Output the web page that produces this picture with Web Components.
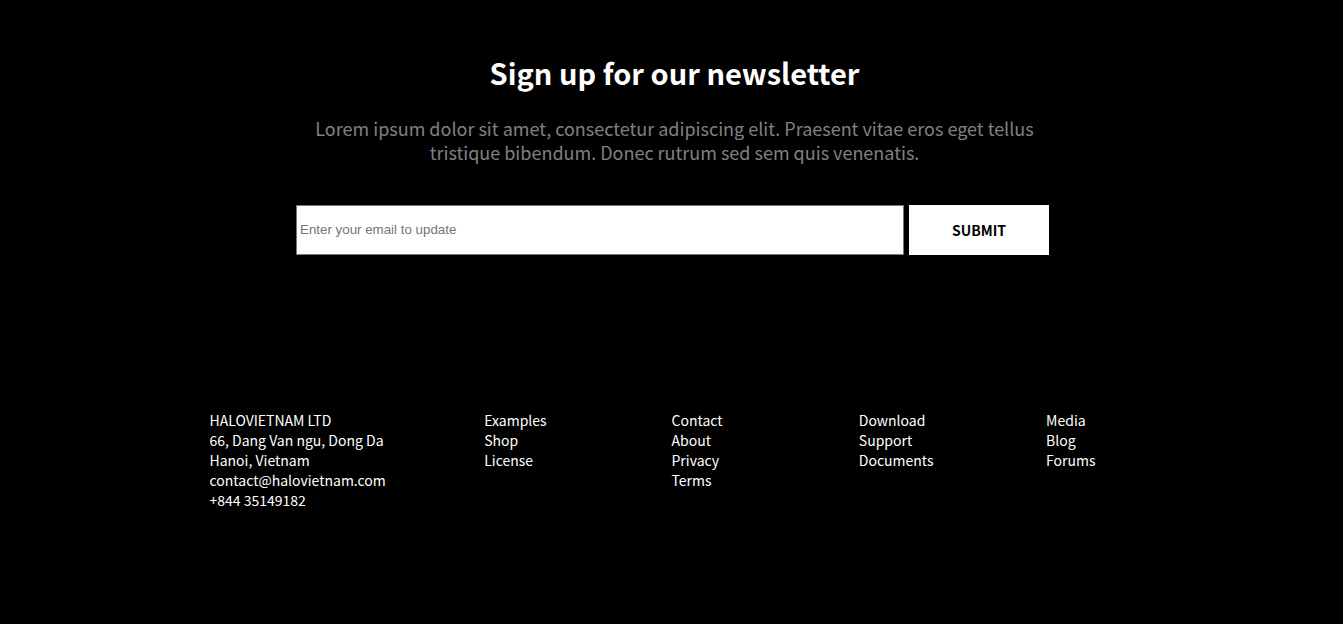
<!DOCTYPE html>
<html lang="en">
<head>
<meta charset="utf-8">
<meta name="viewport" content="width=device-width, initial-scale=1">
<title>Halovietnam newsletter</title>
<style>
  body {
    margin: 0;
    background: #000;
    color: #fff;
    font-family: "Source Sans Pro", "Noto Sans CJK SC", "Noto Sans", sans-serif;
    font-size: 14px;
    line-height: 20px;
  }
</style>
</head>
<body>
<newsletter-signup></newsletter-signup>
<site-footer>
  <footer-column size="wide">
    <span>HALOVIETNAM LTD</span>
    <span>66, Dang Van ngu, Dong Da</span>
    <span>Hanoi, Vietnam</span>
    <a href="mailto:contact@halovietnam.com">contact@halovietnam.com</a>
    <a href="tel:+84435149182">+844 35149182</a>
  </footer-column>
  <footer-column><a href="#examples">Examples</a><a href="#shop">Shop</a><a href="#license">License</a></footer-column>
  <footer-column><a href="#contact">Contact</a><a href="#about">About</a><a href="#privacy">Privacy</a><a href="#terms">Terms</a></footer-column>
  <footer-column><a href="#download">Download</a><a href="#support">Support</a><a href="#documents">Documents</a></footer-column>
  <footer-column size="narrow"><a href="#media">Media</a><a href="#blog">Blog</a><a href="#forums">Forums</a></footer-column>
</site-footer>

<template id="newsletter-template">
  <style>
    :host { display: block; padding: 54px 24px 0 30px; text-align: center; }
    section { max-width: 757px; margin: 0 auto; }
    h2 { margin: 0; font-size: 29px; line-height: 36px; font-weight: 700; }
    p { margin: 26px 0 0; padding: 0 16px; font-size: 18px; line-height: 24px; color: #808080; }
    form { display: flex; gap: 5px; margin-top: 41px; padding-right: 4px; }
    input {
      flex: 1; min-width: 0; height: 50px; box-sizing: border-box; margin: 0; padding: 0 3px 2px;
      border: 1px solid #767676; background: #fff; color: #000;
      font-family: "Liberation Sans", Arial, sans-serif;
    }
    input::placeholder { color: #757575; }
    button {
      width: 140px; height: 50px; padding: 0; border: 0; background: #fff; color: #000;
      font: inherit; font-weight: 700; cursor: pointer;
    }
  </style>
  <section>
    <h2>Sign up for our newsletter</h2>
    <p>Lorem ipsum dolor sit amet, consectetur adipiscing elit. Praesent vitae eros eget tellus tristique bibendum. Donec rutrum sed sem quis venenatis.</p>
    <form>
      <input type="email" aria-label="Email address" placeholder="Enter your email to update">
      <button type="submit">SUBMIT</button>
    </form>
  </section>
</template>

<template id="footer-template">
  <style>
    :host { display: block; padding: 155px 24px 113px; }
    footer { display: flex; max-width: 924px; margin: 0 auto; }
  </style>
  <footer><slot></slot></footer>
</template>

<template id="column-template">
  <style>
    :host { display: flex; flex-direction: column; align-items: flex-start; flex: 15; min-width: 0; }
    :host([size="wide"]) { flex: 22; }
    :host([size="narrow"]) { flex: 7; }
    ::slotted(*) { color: inherit; text-decoration: none; }
  </style>
  <slot></slot>
</template>

<script>
  class TemplateElement extends HTMLElement {
    constructor() {
      super();
      const template = document.getElementById(this.constructor.templateId);
      this.attachShadow({ mode: "open" }).append(template.content.cloneNode(true));
    }
  }
  customElements.define("newsletter-signup", class extends TemplateElement { static templateId = "newsletter-template"; });
  customElements.define("site-footer", class extends TemplateElement { static templateId = "footer-template"; });
  customElements.define("footer-column", class extends TemplateElement { static templateId = "column-template"; });
</script>
</body>
</html>
